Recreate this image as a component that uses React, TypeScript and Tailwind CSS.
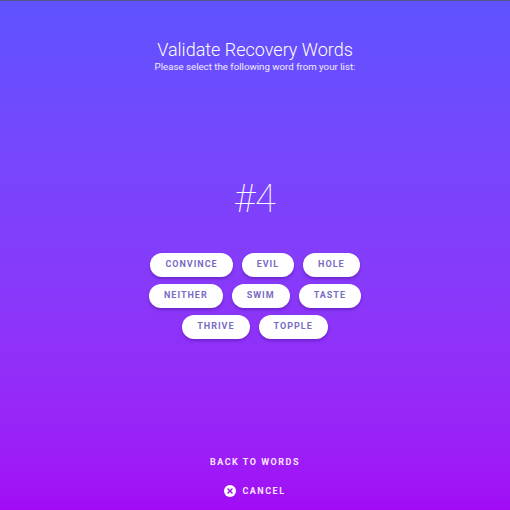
import { X } from "lucide-react";

const rows = [
  ["CONVINCE", "EVIL", "HOLE"],
  ["NEITHER", "SWIM", "TASTE"],
  ["THRIVE", "TOPPLE"],
];

function WordPill({ word }: { word: string }) {
  return (
    <button className="h-6 px-[15px] rounded-full bg-white text-[9px] font-bold tracking-[1px] text-[#776cc4] shadow-[0_2px_3px_rgba(60,0,120,0.35)]">
      {word}
    </button>
  );
}

export default function App() {
  return (
    <div className="w-[510px] h-[510px] flex flex-col items-center border-t border-[#55558a] bg-gradient-to-b from-[#5e52ff] to-[#a20af6] text-white font-['Roboto',sans-serif]">
      <h1 className="mt-[38px] text-[18px] font-light leading-[22px]">Validate Recovery Words</h1>
      <p className="text-[9.7px] leading-[12px] text-white/90">Please select the following word from your list:</p>

      <div className="mt-[104px] text-[38px] font-thin leading-[44px]">#4</div>

      <div className="mt-[32px] flex flex-col items-center gap-[7px]">
        {rows.map((row, i) => (
          <div key={i} className="flex gap-[9px]">
            {row.map((w) => (
              <WordPill key={w} word={w} />
            ))}
          </div>
        ))}
      </div>

      <button className="mt-[117px] text-[9px] font-bold tracking-[1.5px] text-[#fbe6ff]">BACK TO WORDS</button>
      <button className="mt-[15px] flex items-center gap-[6px] text-[9px] font-bold tracking-[1.5px] text-[#fbe6ff]">
        <span className="w-3 h-3 rounded-full bg-white flex items-center justify-center">
          <X className="w-2 h-2 text-[#a00cf5]" strokeWidth={4} />
        </span>
        CANCEL
      </button>
    </div>
  );
}
